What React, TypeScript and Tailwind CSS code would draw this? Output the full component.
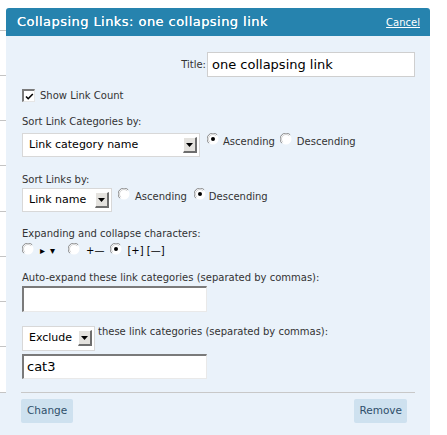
import React from "react";

const Radio = ({ checked = false }: { checked?: boolean }) => (
  <svg width="12" height="12" viewBox="0 0 12 12" className="shrink-0 block">
    <circle cx="6" cy="6" r="5.5" fill="#ffffff" />
    <path d="M1.8 10.2 A5.6 5.6 0 0 1 10.2 1.8" stroke="#8a8a8a" strokeWidth="1" fill="none" />
    <path d="M2.8 9.2 A4.5 4.5 0 0 1 9.2 2.8" stroke="#d0d0d0" strokeWidth="1" fill="none" />
    {checked && <circle cx="6" cy="6" r="2" fill="#000000" />}
  </svg>
);

const Checkbox = () => (
  <div className="w-[13px] h-[13px] shrink-0 bg-white border-t-[2px] border-l-[2px] border-t-[#7a7a7a] border-l-[#7a7a7a] border-b border-r border-b-[#e6e6e6] border-r-[#e6e6e6] flex items-center justify-center">
    <svg width="9" height="9" viewBox="0 0 9 9">
      <path d="M1 4.5 L3.2 6.7 L7.8 2" stroke="#000" strokeWidth="1.6" fill="none" />
    </svg>
  </div>
);

const Select = ({ label, w, h = "h-[24px]" }: { label: string; w: string; h?: string }) => (
  <div className={`${w} ${h} shrink-0 bg-white border border-[#d8d8d8] flex items-center pl-[6px] pr-[2px]`}>
    <span className="flex-1 text-[11px] leading-[14px] text-black whitespace-nowrap">{label}</span>
    <div className="w-[14px] h-[16px] bg-[#e4e2de] border-t border-l border-t-white border-l-white border-b-[2px] border-r-[2px] border-b-[#6e6e6e] border-r-[#6e6e6e] flex items-center justify-center">
      <svg width="7" height="4" viewBox="0 0 7 4">
        <polygon points="0,0 7,0 3.5,4" fill="#000" />
      </svg>
    </div>
  </div>
);

const Label = ({ children, className = "" }: { children: React.ReactNode; className?: string }) => (
  <div className={`text-[10px] leading-[12px] text-[#333] whitespace-nowrap ${className}`}>{children}</div>
);

const InsetBox = ({ value, className = "" }: { value: string; className?: string }) => (
  <div className={`w-[185px] h-[26px] bg-white border-t-[2px] border-l-[2px] border-t-[#7a7a7a] border-l-[#7a7a7a] border-b border-r border-b-[#e9e9e9] border-r-[#e9e9e9] flex items-center pl-[3px] text-[13px] text-black ${className}`}>
    {value}
  </div>
);

export default function App() {
  const strip = [45, 45, 45, 46, 45, 45, 45, 46];
  return (
    <div className="w-[447px] h-[435px] bg-white flex flex-col overflow-hidden" style={{ fontFamily: '"DejaVu Sans", Verdana, sans-serif' }}>
      <div className="flex">
        <div className="w-[6px] shrink-0 flex flex-col">
          <div className="h-[31px] border-b border-[#c4c4c4]" />
          {strip.map((h, i) => (
            <div key={i} className={`${h === 46 ? "h-[46px]" : "h-[45px]"} border-b border-[#c4c4c4]`} />
          ))}
        </div>
        <div className="w-[424px] pt-[8px] flex flex-col">
          <div className="h-[28px] bg-[#2683ae] rounded-t-[3px] flex items-center justify-between pl-[11px] pr-[10px]">
            <span className="text-white text-[13px] tracking-[0.45px] whitespace-nowrap [text-shadow:0_0_0.4px_#fff]">Collapsing Links: one collapsing link</span>
            <span className="text-white text-[10px] underline">Cancel</span>
          </div>
          <div className="bg-[#eaf2fa] h-[357px] flex flex-col pl-[16px] pr-[15px] pt-[16px]">
            <div className="flex justify-end items-center h-[25px]">
              <span className="text-[10px] text-[#333] mr-[1px]">Title:</span>
              <div className="w-[208px] h-[25px] bg-white border border-[#cfcfcf] flex items-center pl-[4px] text-[13px] text-black">one collapsing link</div>
            </div>
            <div className="flex items-center mt-[12px] h-[13px]">
              <Checkbox />
              <Label className="ml-[5px]">Show Link Count</Label>
            </div>
            <Label className="mt-[14px]">Sort Link Categories by:</Label>
            <div className="flex items-start mt-[5px]">
              <Select label="Link category name" w="w-[178px]" />
              <div className="ml-[7px]"><Radio checked /></div>
              <Label className="ml-[4px] mt-[3px]">Ascending</Label>
              <div className="ml-[5px]"><Radio /></div>
              <Label className="ml-[5px] mt-[3px]">Descending</Label>
            </div>
            <Label className="mt-[17px]">Sort Links by:</Label>
            <div className="flex items-start mt-[2px]">
              <Select label="Link name" w="w-[90px]" />
              <div className="ml-[6px]"><Radio /></div>
              <Label className="ml-[5px] mt-[3px]">Ascending</Label>
              <div className="ml-[7px]"><Radio checked /></div>
              <Label className="ml-[3px] mt-[3px]">Descending</Label>
            </div>
            <Label className="mt-[16px]">Expanding and collapse characters:</Label>
            <div className="flex items-start mt-[3px] h-[14px]">
              <Radio />
              <Label className="ml-[6px] mt-[2px] text-black">▸</Label>
              <Label className="ml-[5px] mt-[2px] text-black">▾</Label>
              <div className="ml-[13px]"><Radio /></div>
              <Label className="ml-[6px] mt-[2px] text-black">+</Label>
              <Label className="mt-[2px] text-black">—</Label>
              <div className="ml-[6px]"><Radio checked /></div>
              <Label className="ml-[5px] mt-[2px] text-black">[+] [—]</Label>
            </div>
            <Label className="mt-[15px]">Auto-expand these link categories (separated by commas):</Label>
            <InsetBox value="" className="mt-[2px]" />
            <div className="flex items-start mt-[14px]">
              <Select label="Exclude" w="w-[73px]" h="h-[25px]" />
              <Label className="ml-[3px] mt-[0px]">these link categories (separated by commas):</Label>
            </div>
            <InsetBox value="cat3" className="mt-[3px]" />
            <div className="mt-[13px] -ml-[1px] h-px bg-[#c8c8c8]" />
          </div>
        </div>
      </div>
      <div className="w-[430px] flex-1 bg-[#eaf2fa] flex justify-between pl-[21px] pr-[23px] pt-[6px] items-start">
        <div className="h-[24px] px-[6px] bg-[#cee1ef] rounded-[2px] flex items-center text-[10.5px] text-[#2f4f6a]">Change</div>
        <div className="h-[24px] px-[5px] bg-[#cee1ef] rounded-[2px] flex items-center text-[10.5px] text-[#2f4f6a]">Remove</div>
      </div>
    </div>
  );
}
